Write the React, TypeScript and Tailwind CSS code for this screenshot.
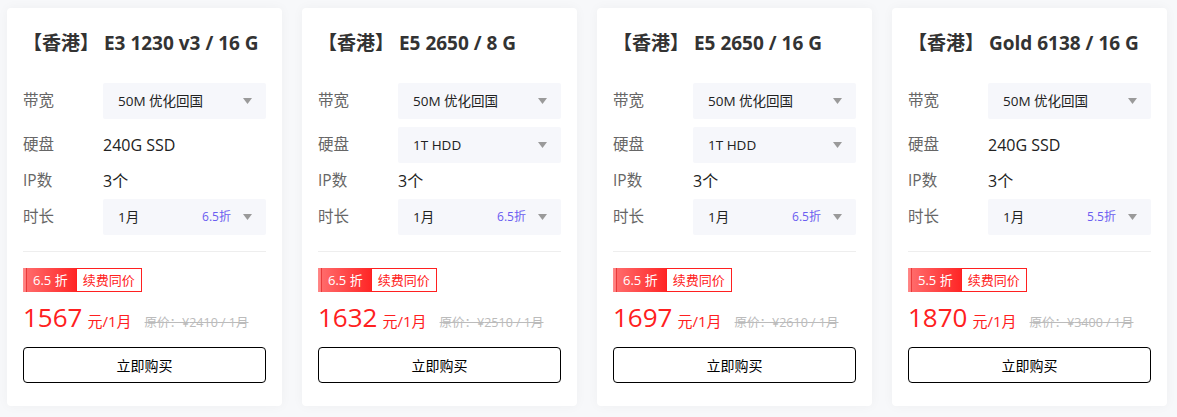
import React from "react";

type Plan = {
  title: string;
  bandwidth: string;
  disk: string;
  diskSelect: boolean;
  discount: string;
  price: string;
  original: string;
};

const plans: Plan[] = [
  { title: "E3 1230 v3 / 16 G", bandwidth: "50M 优化回国", disk: "240G SSD", diskSelect: false, discount: "6.5", price: "1567", original: "2410" },
  { title: "E5 2650 / 8 G", bandwidth: "50M 优化回国", disk: "1T HDD", diskSelect: true, discount: "6.5", price: "1632", original: "2510" },
  { title: "E5 2650 / 16 G", bandwidth: "50M 优化回国", disk: "1T HDD", diskSelect: true, discount: "6.5", price: "1697", original: "2610" },
  { title: "Gold 6138 / 16 G", bandwidth: "50M 优化回国", disk: "240G SSD", diskSelect: false, discount: "5.5", price: "1870", original: "3400" },
];

const Caret = () => (
  <svg width="9" height="6" viewBox="0 0 9 6" className="shrink-0">
    <path d="M0 0h9L4.5 6z" fill="#9a9a9a" />
  </svg>
);

const Select = ({ value, extra }: { value: string; extra?: string }) => (
  <div className="flex h-9 flex-1 items-center rounded-[2px] bg-[#f6f7fb] pl-[15px] pr-[14px] text-[13.5px] text-[#222]">
    <span className="flex-1">{value}</span>
    {extra && <span className="mr-[12px] text-[12px] text-[#6a5cf0]">{extra}</span>}
    <Caret />
  </div>
);

const Row = ({ label, children, className = "" }: { label: string; children: React.ReactNode; className?: string }) => (
  <div className={`flex h-9 items-center ${className}`}>
    <span className="w-20 shrink-0 text-[15.5px] text-[#666]">{label}</span>
    {children}
  </div>
);

const Card = ({ plan }: { plan: Plan }) => (
  <div className="flex h-[398px] w-[275px] shrink-0 flex-col rounded-[4px] bg-white px-4 shadow-[0_0_12px_rgba(0,0,0,0.04)]">
    <h2 className="mt-[23px] text-[19px] font-bold leading-6 text-[#333]">
      【香港】 {plan.title}
    </h2>
    <Row label="带宽" className="mt-[28px]">
      <Select value={plan.bandwidth} />
    </Row>
    <Row label="硬盘" className="mt-2">
      {plan.diskSelect ? (
        <Select value={plan.disk} />
      ) : (
        <span className="text-[16px] text-[#222]">{plan.disk}</span>
      )}
    </Row>
    <Row label="IP数">
      <span className="text-[16px] text-[#222]">3个</span>
    </Row>
    <Row label="时长">
      <Select value="1月" extra={`${plan.discount}折`} />
    </Row>
    <div className="mt-4 h-px bg-[#eeeeee]" />
    <div className="mt-4 flex h-6 w-fit text-[13px] leading-none">
      <div className="flex h-6 items-center bg-[linear-gradient(90deg,#ff8a8a_0,#ff7a7a_3px,#e83a3a_3px,#e83a3a_4px,#ff6a6a_4px,#ff2626_100%)] pl-[10px] pr-[8px] text-white">
        {plan.discount} 折
      </div>
      <div className="flex h-6 items-center border border-[#ff2020] bg-white px-[6px] text-[#ff2020]">
        续费同价
      </div>
    </div>
    <div className="mt-[8px] flex items-baseline whitespace-nowrap text-[#ff2020]">
      <span className="text-[26px] leading-[34px]">{plan.price}</span>
      <span className="ml-[5px] text-[15px]">元/1月</span>
      <span className="ml-[13px] text-[12.5px] text-[#bbbbbb] line-through">
        原价：¥{plan.original} / 1月
      </span>
    </div>
    <button className="mt-[13px] h-9 w-full rounded-[4px] border border-black bg-white text-[14px] text-black">
      立即购买
    </button>
  </div>
);

export default function App() {
  return (
    <div className="min-h-[417px] w-full bg-[#f7f8fa] pl-[7px] pt-2 font-['Open_Sans','Noto_Sans_CJK_SC',sans-serif]">
      <div className="flex gap-5">
        {plans.map((p) => (
          <Card key={p.title} plan={p} />
        ))}
      </div>
    </div>
  );
}
